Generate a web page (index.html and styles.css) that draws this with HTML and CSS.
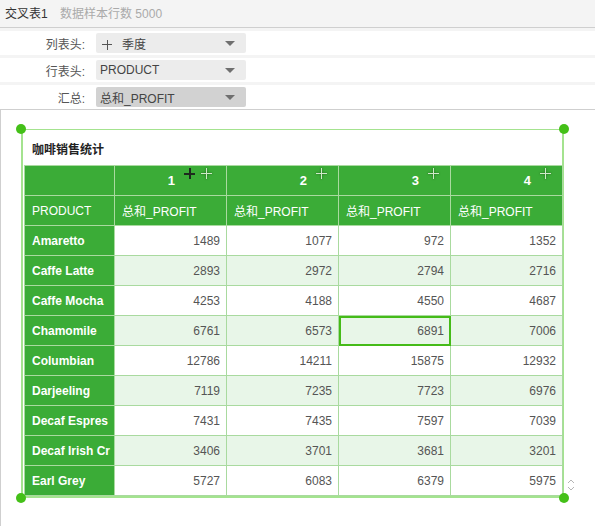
FILE: index.html
```html
<!DOCTYPE html>
<html lang="zh-CN">
<head>
    <meta charset="UTF-8">
    <title>交叉表1</title>
    <link rel="stylesheet" href="styles.css">
</head>
<body>
    <div class="topbar">
        <span class="tb-name">交叉表1</span>
        <span class="tb-info">数据样本行数 5000</span>
    </div>

    <!-- binding panel -->
    <div class="panel">
        <div class="prow">
            <label>列表头:</label>
            <div class="dd"><span><i class="add"></i>季度</span><i class="caret"></i></div>
        </div>
        <div class="prow">
            <label>行表头:</label>
            <div class="dd"><span>PRODUCT</span><i class="caret"></i></div>
        </div>
        <div class="prow">
            <label>汇总:</label>
            <div class="dd active"><span>总和_PROFIT</span><i class="caret"></i></div>
        </div>
    </div>

    <div class="canvas">
        <div class="widget">
            <span class="handle tl"></span>
            <span class="handle tr"></span>
            <span class="handle bl"></span>
            <span class="handle br"></span>
            <div class="w-title">咖啡销售统计</div>
            <table class="cross">
                <colgroup>
                    <col class="c0"><col class="c1"><col class="c1"><col class="c1"><col class="c1">
                </colgroup>
                <thead>
                    <tr class="hd1">
                        <th></th>
                        <th class="first">1<span class="plus dark"></span><span class="plus"></span></th>
                        <th>2<span class="plus"></span></th>
                        <th>3<span class="plus"></span></th>
                        <th>4<span class="plus"></span></th>
                    </tr>
                    <tr class="hd2">
                        <th>PRODUCT</th>
                        <th>总和_PROFIT</th>
                        <th>总和_PROFIT</th>
                        <th>总和_PROFIT</th>
                        <th>总和_PROFIT</th>
                    </tr>
                </thead>
                <tbody id="rows"></tbody>
            </table>
        </div>
        <svg class="spin" width="8" height="14" viewBox="0 0 8 14">
            <path d="M1 5 L4 2 L7 5 M1 9 L4 12 L7 9" fill="none" stroke="#b5b5b5" stroke-width="1"/>
        </svg>
    </div>

    <script>
        const data = [
            ['Amaretto', 1489, 1077, 972, 1352],
            ['Caffe Latte', 2893, 2972, 2794, 2716],
            ['Caffe Mocha', 4253, 4188, 4550, 4687],
            ['Chamomile', 6761, 6573, 6891, 7006],
            ['Columbian', 12786, 14211, 15875, 12932],
            ['Darjeeling', 7119, 7235, 7723, 6976],
            ['Decaf Espres', 7431, 7435, 7597, 7039],
            ['Decaf Irish Cr', 3406, 3701, 3681, 3201],
            ['Earl Grey', 5727, 6083, 6379, 5975]
        ];

        const tbody = document.getElementById('rows');
        tbody.innerHTML = data.map((r, i) => {
            const cells = r.slice(1).map((v, j) => {
                const sel = (i === 3 && j === 2) ? ' class="sel"' : '';
                return `<td${sel}>${v}</td>`;
            }).join('');
            return `<tr class="${i % 2 ? 'alt' : ''}"><th>${r[0]}</th>${cells}</tr>`;
        }).join('');
    </script>
</body>
</html>
```

FILE: styles.css
```css
body {
    margin: 0;
    font-family: "Liberation Sans", Arial, "Noto Sans CJK SC", sans-serif;
    font-size: 12px;
    color: #333;
    background: #fff;
    width: 595px;
    height: 526px;
    overflow: hidden;
}
.topbar {
    height: 27px;
    line-height: 28px;
    background: #f4f4f4;
    border-bottom: 1px solid #cfcfcf;
    padding-left: 5px;
}
.tb-name {
    color: #333;
    margin-right: 9px;
}
.tb-info {
    color: #aaa;
}
.panel {
    background: #f4f4f4;
    padding-top: 3px;
    border-bottom: 1px solid #cfcfcf;
    display: flex;
    flex-direction: column;
    gap: 3px;
}
.prow {
    height: 24px;
    background: #fff;
    display: flex;
    align-items: center;
}
.prow label {
    width: 85px;
    text-align: right;
    color: #555;
    margin-right: 11px;
}
.dd {
    width: 150px;
    height: 20px;
    background: #ececec;
    border-radius: 2px;
    display: flex;
    align-items: center;
    justify-content: space-between;
    padding: 0 11px 0 4px;
    box-sizing: border-box;
    color: #444;
}
.dd.active {
    background: #d2d2d2;
}
.add {
    display: inline-block;
    width: 10px;
    height: 10px;
    margin: 0 10px 0 2px;
    vertical-align: -1px;
    background:
        linear-gradient(#555, #555) center / 10px 1px no-repeat,
        linear-gradient(#555, #555) center / 1px 10px no-repeat;
}
.caret {
    width: 0;
    height: 0;
    border-left: 5px solid transparent;
    border-right: 5px solid transparent;
    border-top: 5px solid #6f6f6f;
}
.canvas {
    position: relative;
    height: 416px;
    border-left: 1px solid #cfcfcf;
}
.widget {
    position: absolute;
    left: 20px;
    top: 19px;
    width: 543px;
    height: 369px;
    border: 2px solid #a4e38f;
    border-top-width: 1px;
    box-sizing: border-box;
    padding-left: 1px;
}
.handle {
    position: absolute;
    width: 10px;
    height: 10px;
    border-radius: 50%;
    background: #44c018;
}
.handle.tl { left: -7px; top: -6px; }
.handle.tr { right: -7px; top: -6px; }
.handle.bl { left: -7px; bottom: -7px; }
.handle.br { right: -7px; bottom: -7px; }
.w-title {
    height: 35px;
    line-height: 40px;
    padding-left: 8px;
    font-weight: bold;
    font-size: 12px;
    color: #222;
}
.cross {
    border-collapse: collapse;
    table-layout: fixed;
    width: 539px;
}
.cross col.c0 { width: 90px; }
.cross col.c1 { width: 112px; }
.cross th, .cross td {
    height: 29px;
    border: 1px solid #a9da9f;
    padding: 0;
    white-space: nowrap;
    overflow: hidden;
}
.cross thead th {
    background: #3bac37;
    color: #fff;
    font-weight: normal;
    text-align: left;
    padding-left: 7px;
}
.cross .hd1 th {
    text-align: right;
    font-weight: bold;
    font-size: 13px;
    line-height: 16px;
    padding-right: 11px;
    vertical-align: bottom;
    padding-bottom: 6px;
    height: 23px;
}
.cross .hd1 th.first {
    padding-right: 14px;
}
.plus {
    display: inline-block;
    width: 11px;
    height: 11px;
    margin-left: 9px;
    vertical-align: 6px;
    background:
        linear-gradient(#cfe9c8, #cfe9c8) center / 11px 1px no-repeat,
        linear-gradient(#cfe9c8, #cfe9c8) center / 1px 11px no-repeat;
    filter: drop-shadow(0 0 1px #1f5f1d);
}
.plus.dark {
    background:
        linear-gradient(#1e2a1e, #1e2a1e) center / 11px 2px no-repeat,
        linear-gradient(#1e2a1e, #1e2a1e) center / 2px 11px no-repeat;
    filter: none;
}
.plus.dark + .plus {
    margin-left: 6px;
}
.cross tbody th {
    background: #3bac37;
    color: #fff;
    font-weight: bold;
    text-align: left;
    padding-left: 7px;
}
.cross tbody td {
    text-align: right;
    padding-right: 6px;
    color: #555;
    background: #fff;
}
.cross tbody tr.alt td {
    background: #e8f6e8;
}
.cross td.sel {
    outline: 2px solid #45bb18;
    outline-offset: -2px;
}
.spin {
    position: absolute;
    left: 566px;
    top: 368px;
}
```
